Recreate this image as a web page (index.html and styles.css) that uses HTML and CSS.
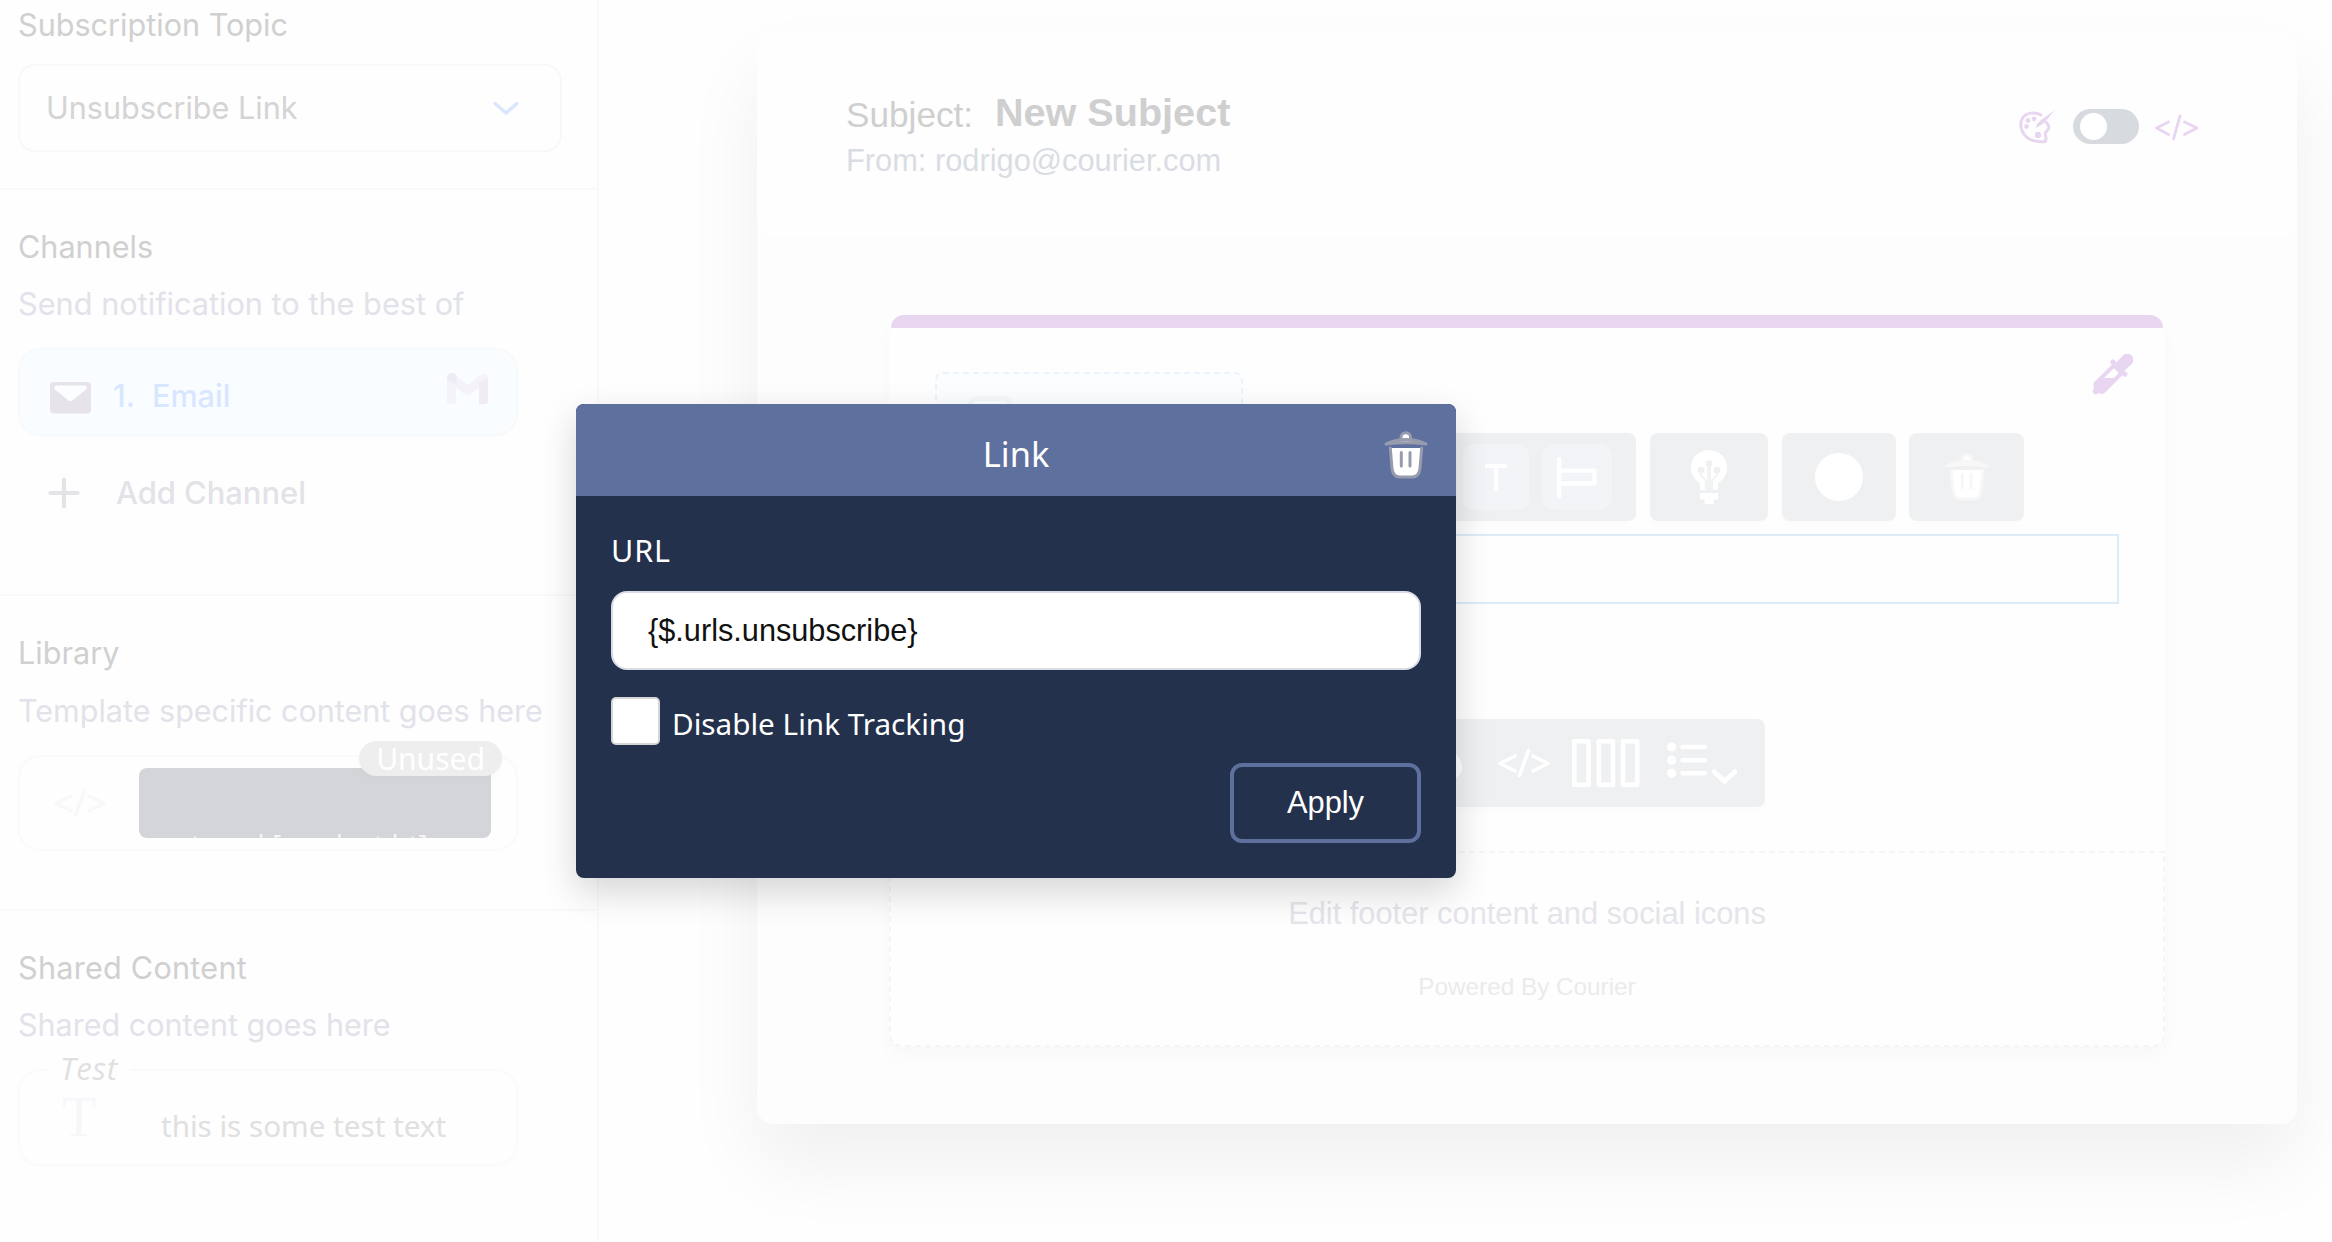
FILE: index.html
```
<!DOCTYPE html>
<html lang="en">
<head>
<meta charset="utf-8">
<title>Notification designer</title>
<link rel="stylesheet" href="styles.css">
</head>
<body>
<svg class="defs" width="0" height="0" aria-hidden="true">
  <symbol id="code" viewBox="0 0 54 30"><path d="M18 8 3 15.500 18 23M36 8l15 7.500L36 23M31.500 2.500 22.500 27.500" fill="none" stroke="currentColor" stroke-width="3.600" stroke-linecap="round" stroke-linejoin="round"/></symbol>
  <symbol id="trash" viewBox="0 0 44 48"><path class="t" d="M17 8.500V6.500a4.800 4.800 0 0 1 9.600 0V8.500M2 13C13 7 31 7 42 13 31 11.500 13 11.500 2 13Z"/><path class="t" d="M6.300 17 8 37.500Q9 46 16 46H28Q35 46 36 37.500L37.700 17"/><path class="t" d="M17.300 21.500V35M26 21.500V35"/></symbol>
</svg>
<div class="app">
  <aside class="sidebar">
    <section class="section topic">
      <h2 class="heading">Subscription Topic</h2>
      <div class="select"><span>Unsubscribe Link</span>
        <svg width="26" height="14" viewBox="0 0 26 14"><path d="M2 2.500 13 12 24 2.500" fill="none" stroke="#d8e6ff" stroke-width="3.400" stroke-linecap="round" stroke-linejoin="round"/></svg>
      </div>
    </section>
    <section class="section channels">
      <h2 class="heading">Channels</h2>
      <p class="note send">Send notification to the best of</p>
      <div class="channel">
        <svg class="envelope" width="41" height="32" viewBox="0 0 41 32"><rect width="41" height="31.500" rx="4" fill="#e6e4ea"/><path d="M6 3.500H35Q38 5 36 7.500L22.500 18.500Q20.500 20 18.500 18.500L5 7.500Q3 5 6 3.500Z" fill="#fbfdff"/></svg>
        <span class="num">1.</span><span class="name">Email</span>
        <svg class="gmail" width="41" height="32" viewBox="0 0 41 32"><path d="M4.500 5 20.500 18 36.500 5" fill="none" stroke="#f5f3f9" stroke-width="9" stroke-linejoin="round" stroke-linecap="round"/><path d="M0 6V28Q0 31 3 31H9V10Z" fill="#f4f3f9"/><path d="M41 6V28Q41 31 38 31H32V10Z" fill="#efecf4"/><path d="M0 5Q0 0 5 0 9 0 9.500 5V12L0 7Z" fill="#eeebf4"/></svg>
      </div>
      <div class="add">
        <svg width="32" height="32" viewBox="0 0 32 32"><path d="M16 2.500V29.500M2.500 16H29.500" stroke="#e3e3e9" stroke-width="4.200" stroke-linecap="round"/></svg>
        <span>Add Channel</span>
      </div>
    </section>
    <section class="section library">
      <h2 class="heading">Library</h2>
      <p class="note">Template specific content goes here</p>
      <div class="block">
        <span class="badge">Unused</span>
        <svg class="code" width="54" height="30"><use href="#code"/></svg>
        <div class="preview"><span>travel [product.ht]</span></div>
      </div>
    </section>
    <section class="section shared">
      <h2 class="heading">Shared Content</h2>
      <p class="note">Shared content goes here</p>
      <div class="block named">
        <span class="legend">Test</span>
        <span class="serif">T</span>
        <span class="sample">this is some test text</span>
      </div>
    </section>
  </aside>

  <main class="canvas">
    <div class="panel">
      <header class="mail-head">
        <div>
          <div class="subject"><span class="label">Subject:</span><span class="value">New Subject</span></div>
          <div class="from">From: rodrigo@courier.com</div>
        </div>
        <div class="tools">
          <svg class="palette" width="36" height="34" viewBox="0 0 36 34"><path d="M22 5C16 1.500 7 2.500 3.500 8 -0.500 15 3 24 9.500 28.500 15 32 21 32 26.500 31.500 28 28 25.500 24.500 26.500 22.500 28 20 31 19.500 29.500 15.500L27.500 12.500" fill="none" stroke="#e8d6f1" stroke-width="3" stroke-linecap="round" stroke-linejoin="round"/><path d="M36 0 25 13Q21 16 16.500 18 18 13 22 10Z" fill="#e8d6f1"/><g fill="#e8d6f1"><circle cx="9" cy="10.500" r="2.400"/><circle cx="15" cy="8.800" r="2.400"/><circle cx="7.500" cy="16.500" r="2.400"/><circle cx="19" cy="25" r="3.200"/></g></svg>
          <span class="toggle"></span>
          <svg class="code" width="45" height="28" viewBox="0 0 45 28"><path d="M14.500 8 2.500 14 14.500 20.500M30.500 8 43 14 30.500 20.500M26 2 19.500 25" fill="none" stroke="currentColor" stroke-width="2.800" stroke-linecap="round" stroke-linejoin="round"/></svg>
        </div>
      </header>
      <div class="card">
        <div class="accent"></div>
        <div class="brand">
          <div class="logo"><svg width="44" height="36" viewBox="0 0 44 36"><rect x="2.500" y="2.500" width="39" height="50" rx="6" fill="none" stroke="#f5f7f9" stroke-width="5"/></svg></div>
          <svg width="41" height="41" viewBox="0 0 41 41"><g transform="rotate(45 20.500 20.500)"><rect x="14.500" y="-6.500" width="12" height="19" rx="6" fill="#e8d6f1"/><rect x="9.500" y="9" width="22" height="5" rx="2" fill="#e8d6f1"/><path d="M13 12H28V38Q28 42 24 43L22.500 47H18.500L17 43Q13 42 13 38Z" fill="#e8d6f1"/><path d="M17 15H24V22L17 29Z" fill="#fefefe"/></g></svg>
        </div>
        <div class="toolbar">
          <div class="group format">
            <span class="btn text"><svg width="22" height="27" viewBox="0 0 22 27"><path d="M0 2H22M11 2V27" stroke="#fff" stroke-width="4.200"/></svg></span>
            <span class="btn align"><svg width="40" height="41" viewBox="0 0 40 41"><path d="M2.200 2V39M3 13.700H37.500V26.500H3" fill="none" stroke="#fff" stroke-width="4.300" stroke-linecap="round" stroke-linejoin="round"/></svg></span>
          </div>
          <div class="group bulb"><svg width="36" height="54" viewBox="0 0 36 54"><path d="M18 0A17.600 17.600 0 0 0 9 33V40H27V33A17.600 17.600 0 0 0 18 0Z" fill="#fff"/><path d="M9 43H27V49.500H23V54H13.500V49.500H9Z" fill="#fff"/><g fill="none" stroke="#eff0f2" stroke-width="1.600"><path d="M10 20V25L15 31V40M26 20V25L21 31V40M17 13V40M19 13V40"/></g><g fill="#eff0f2"><circle cx="10" cy="20" r="3.300"/><circle cx="26" cy="20" r="3.300"/><circle cx="18" cy="13.500" r="3.300"/></g></svg></div>
          <div class="group dot"><span></span></div>
          <div class="group bin"><svg class="trash soft" width="44" height="48"><use href="#trash"/></svg></div>
        </div>
        <div class="editing"></div>
        <div class="group blocks">
          <svg width="28" height="36" viewBox="0 0 28 36"><path d="M14 0Q27 14 27 22A13 13 0 0 1 1 22Q1 14 14 0Z" fill="#fff"/></svg>
          <svg class="code" width="54" height="30"><use href="#code"/></svg>
          <svg class="cols" width="68" height="48" viewBox="0 0 68 48"><g fill="none" stroke="#fff" stroke-width="4.600" stroke-linejoin="round"><rect x="2.300" y="2.300" width="14.200" height="43.400"/><rect x="26.800" y="2.300" width="14.200" height="43.400"/><rect x="51" y="2.300" width="14.200" height="43.400"/></g></svg>
          <svg class="list" width="70" height="44" viewBox="0 0 70 44"><g fill="#fff"><circle cx="4.600" cy="5" r="4.600"/><circle cx="4.600" cy="18.200" r="4.600"/><circle cx="4.600" cy="31.300" r="4.600"/></g><path d="M15.500 5H38M15.500 18.200H38M15.500 31.300H38M47 29.500 57.500 39.500 68 29.500" fill="none" stroke="#fff" stroke-width="4.600" stroke-linecap="round" stroke-linejoin="round"/></svg>
        </div>
        <footer class="mail-foot">
          <div class="edit">Edit footer content and social icons</div>
          <div class="powered">Powered By Courier</div>
        </footer>
      </div>
    </div>
  </main>
</div>

<div class="modal">
  <div class="modal-head"><span class="title">Link</span><svg class="trash" width="44" height="48"><use href="#trash"/></svg></div>
  <div class="modal-body">
    <label class="url">URL</label>
    <div class="input">{$.urls.unsubscribe}</div>
    <div class="check"><span class="box"></span><span>Disable Link Tracking</span></div>
    <div class="apply">Apply</div>
  </div>
</div>
</body>
</html>
```
FILE: styles.css
```
* { box-sizing: border-box; }
body { margin: 0; width: 2332px; height: 1242px; overflow: hidden; background: #fefefe; position: relative; }
h2, p { margin: 0; font-weight: 400; }
svg { display: block; flex: none; }
.defs { position: absolute; }
.app { display: flex; height: 1242px; }

/* Sidebar */
.sidebar { width: 599px; flex: none; border-right: 2px solid #f9f9f9; font: 30.6px/40px Inter, sans-serif; white-space: nowrap; }
.section { border-bottom: 2px solid #f9f9f9; padding: 37px 18px 0; }
.topic { height: 190px; padding-top: 5px; }
.channels { height: 406px; }
.library { height: 315px; }
.shared { border: 0; }
.heading { font-size: 30.6px; line-height: 40px; color: #d0d0d0; }
.shared .heading { letter-spacing: .25px; }
.note { margin-top: 17px; font-size: 30.5px; color: #e2e2ea; }
.library .note { margin-top: 18px; }
.note.send { font-size: 30.7px; }
.select { margin-top: 19px; width: 544px; height: 88px; border: 2px solid #f8f8f8; border-radius: 17px; padding: 0 41px 0 26px; display: flex; align-items: center; justify-content: space-between; color: #d4d4d4; }
.channel { margin-top: 24px; width: 500px; height: 88px; border: 2px solid #f8f9fa; border-radius: 22px; background: #fafdff; display: flex; padding-left: 30px; font-weight: 500; color: #d8e6ff; line-height: 92px; }
.envelope { margin-top: 32px; }
.num { margin-left: 22px; width: 39px; }
.name { flex: 1; }
.gmail { margin: 23px 28px 0 0; }
.add { display: flex; align-items: center; margin: 37px 0 0 30px; gap: 36px; font-size: 30.9px; font-weight: 500; color: #e2e2e8; }
.block { position: relative; margin-top: 24px; width: 500px; height: 96px; border: 2px solid #fafafa; border-radius: 22px; display: flex; }
.block .code { margin: 31px 0 0 33px; color: #f6f8fa; }
.preview { margin: 11px 0 0 32px; width: 352px; height: 70px; border-radius: 8px; background: #d4d5d9; overflow: hidden; padding: 58px 0 0 52px; font: 27px/40px "Noto Sans", sans-serif; color: #f6f6f6; }
.preview { padding-top: 57px; letter-spacing: .4px; }
.badge { position: absolute; left: 339px; top: -16px; width: 143px; height: 35px; border-radius: 18px; background: #eee; color: #fff; font: 30px/35px "Noto Sans", sans-serif; text-align: center; box-shadow: 0 4px 8px rgba(0,0,0,.02); }
.named { height: 97px; }
.legend { position: absolute; left: 26px; top: -23px; width: 85px; padding-left: 14px; background: #fefefe; font: italic 31px/40px "Open Sans", sans-serif; letter-spacing: .8px; color: #e0e0e0; }
.serif { margin-left: 42px; width: 99px; font: 56px/93px "Liberation Serif", serif; color: #f5f7fa; }
.sample { font: 29.6px/109px "Noto Sans", sans-serif; color: #e0e0e0; }

/* Email canvas */
.canvas { flex: 1; padding: 33px 35px 0 158px; font-family: "Liberation Sans", Arial, sans-serif; }
.panel { height: 1091px; border-radius: 16px; background: #fdfdfd; box-shadow: 0 40px 80px rgba(0,0,0,.06); }
.mail-head { height: 203px; border-radius: 16px; background: #fefefe; display: flex; justify-content: space-between; padding: 0 98px 0 89px; }
.subject { display: flex; margin-top: 55px; height: 50px; line-height: 50px; color: #cfcfcf; }
.label { width: 149px; font-size: 35.2px; line-height: 53px; }
.value { font-size: 39.6px; font-weight: 700; line-height: 48px; }
.from { margin-top: 3px; font-size: 30.8px; line-height: 40px; color: #d9dde3; }
.tools { display: flex; color: #e8d6f1; margin-top: 76px; }
.palette { margin: 1px 18px 0 0; }
.toggle { width: 66px; height: 35px; border-radius: 18px; background: #d7dbe0; padding: 4px 7px; margin-right: 15px; }
.toggle::before { content: ""; display: block; width: 27px; height: 27px; border-radius: 50%; background: #fff; }
.tools .code { margin-top: 5px; }

.card { margin: 79px 132px 0; height: 732px; border-radius: 16px 16px 12px 12px; background: #fefefe; box-shadow: 0 10px 20px rgba(0,0,0,.025); }
.accent { height: 13px; margin: 0 2px; border-radius: 15px 15px 0 0; background: #e8d6f1; }
.brand { display: flex; justify-content: space-between; align-items: flex-start; padding: 26px 32px 0 46px; height: 104px; }
.logo { margin-top: 18px; width: 308px; height: 60px; border: 2px dashed #ebf4fc; border-bottom: 0; border-radius: 8px 8px 0 0; background: #fbfdff; padding: 22px 0 0 31px; }
.toolbar { display: flex; margin: 1px 0 0 46px; }
.group { height: 88px; border-radius: 8px; background: #eff0f2; box-shadow: 0 6px 10px rgba(0,0,0,.012); display: flex; align-items: center; justify-content: center; }
.format { width: 701px; justify-content: flex-end; gap: 13px; padding-right: 24px; margin-right: 14px; }
.btn { height: 66px; border-radius: 12px; background: #f3f4f8; display: flex; align-items: center; justify-content: center; }
.text { width: 66px; }
.align { width: 70px; }
.bulb { width: 118px; margin-right: 14px; }
.dot { width: 114px; margin-right: 13px; }
.dot span { width: 48px; height: 48px; border-radius: 50%; background: #fff; }
.bin { width: 115px; }
.editing { margin: 13px 46px 0; height: 70px; border: 2px solid #dcebf8; }
.blocks { margin: 115px 0 0 46px; width: 830px; justify-content: flex-end; padding-right: 28px; color: #fff; }
.blocks .code { margin-left: 34px; }
.blocks .cols { margin-left: 21px; }
.blocks .list { margin: 2px 0 0 27px; }
.mail-foot { margin-top: 44px; height: 196px; border: 2px dashed #f5f5f5; border-radius: 0 0 12px 12px; text-align: center; }
.edit { margin-top: 41px; font-size: 30.8px; line-height: 40px; color: #e4e5ea; }
.powered { margin-top: 33px; font-size: 24.3px; line-height: 40px; color: #ebebeb; }

/* Link dialog */
.modal { position: absolute; left: 576px; top: 404px; width: 880px; height: 474px; border-radius: 8px; overflow: hidden; background: #24314c; color: #fff; box-shadow: 0 14px 36px rgba(0,0,0,.16); font-family: "Noto Sans", sans-serif; }
.modal-head { height: 92px; background: #5e709e; display: grid; grid-template-columns: 1fr auto 1fr; align-items: start; padding: 0 28px; }
.title { grid-column: 2; font-size: 34.4px; line-height: 92px; margin-top: 4px; }
.modal-head .trash { justify-self: end; margin-top: 27px; }
.trash { --f: #fff; --s: #979bae; }
.trash.soft { --s: #f7f7f8; }
.t { fill: var(--f); stroke: var(--s); stroke-width: 3; stroke-linecap: round; stroke-linejoin: round; }
.modal-body { display: flex; flex-direction: column; padding: 34px 35px 0; }
.url { font-size: 30.5px; line-height: 40px; letter-spacing: .9px; }
.input { margin-top: 21px; height: 79px; border: 2px solid #dadce6; border-radius: 16px; background: #fff; color: #111; padding-left: 35px; font: 30.7px/75px "Liberation Sans", sans-serif; }
.check { display: flex; margin-top: 27px; height: 48px; gap: 12px; font-size: 29.7px; line-height: 53px; }
.box { width: 49px; height: 48px; border: 2px solid #d5d6d8; border-radius: 5px; background: #fff; }
.apply { align-self: flex-end; margin-top: 18px; width: 191px; height: 80px; border: 4px solid #5e709e; border-radius: 12px; text-align: center; font: 30.8px/71px "Liberation Sans", sans-serif; }
```
